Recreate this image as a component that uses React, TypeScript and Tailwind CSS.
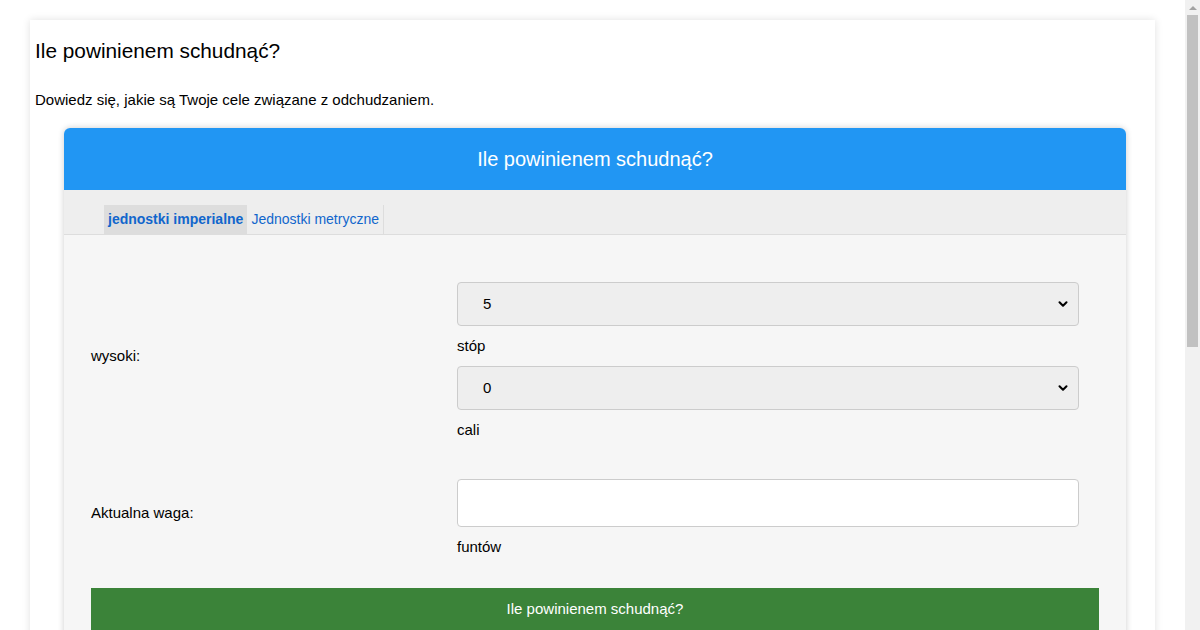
import { ChevronDown } from "lucide-react";

const font = { fontFamily: '"Liberation Sans", Arial, sans-serif' };

function FakeSelect({ value }: { value: string }) {
  return (
    <div className="flex h-[44px] w-[622px] items-center justify-between rounded-[4px] border border-[#cccccc] bg-[#eeeeee] pl-[25px] pr-[8px] text-[15px] text-black">
      <span>{value}</span>
      <ChevronDown size={14} strokeWidth={3.5} className="text-black" />
    </div>
  );
}

function Scrollbar() {
  return (
    <div className="flex h-full w-[15px] shrink-0 flex-col items-center bg-[#f1f1f1]">
      <div className="flex h-[15px] w-full items-center justify-center">
        <div className="h-0 w-0 border-x-[4px] border-b-[4px] border-x-transparent border-b-[#a3a3a3]" />
      </div>
      <div className="h-[332px] w-[11px] bg-[#c1c1c1]" />
    </div>
  );
}

export default function App() {
  return (
    <div className="flex h-screen overflow-hidden bg-white text-black" style={font}>
      <main className="min-w-0 flex-1 overflow-hidden pt-[20px]">
        <div className="mx-auto w-[1125px] bg-white px-[5px] pb-[500px] pt-[19px] shadow-[0_0_8px_rgba(0,0,0,0.12)]">
          <h2 className="text-[20.8px] leading-[24px]">Ile powinienem schudnąć?</h2>
          <p className="mt-[28px] text-[15px] leading-[17px]">
            Dowiedz się, jakie są Twoje cele związane z odchudzaniem.
          </p>

          <div className="ml-[29px] mt-[20px] w-[1062px] overflow-hidden rounded-t-[6px] shadow-[0_0_6px_rgba(0,0,0,0.2)]">
            <div className="flex h-[62px] items-center justify-center bg-[#2196f3] text-[20px] text-white">
              Ile powinienem schudnąć?
            </div>

            <div className="flex border-b border-[#dddddd] bg-[#eeeeee] pl-[40px] pt-[15px]">
              <div className="flex h-[29px] items-center bg-[#dddddd] px-[4px] text-[14px] font-bold text-[#1166cc]">
                jednostki imperialne
              </div>
              <div className="flex h-[29px] items-center border-r border-[#dddddd] px-[4px] text-[14px] text-[#1166cc]">
                Jednostki metryczne
              </div>
            </div>

            <div className="bg-[#f6f6f6] px-[27px] pt-[47px] pb-[40px]">
              <div className="flex items-center">
                <div className="w-[366px] pb-[10px] text-[15px]">wysoki:</div>
                <div className="flex flex-col">
                  <FakeSelect value="5" />
                  <p className="my-[10px] text-[15px] leading-[20px]">stóp</p>
                  <FakeSelect value="0" />
                  <p className="mt-[10px] text-[15px] leading-[20px]">cali</p>
                </div>
              </div>

              <div className="mt-[39px] flex items-center">
                <div className="w-[366px] pb-[10px] text-[15px]">Aktualna waga:</div>
                <div className="flex flex-col">
                  <input
                    type="text"
                    className="h-[48px] w-[622px] rounded-[4px] border border-[#cccccc] bg-white px-[10px] text-[15px] outline-none"
                  />
                  <p className="mt-[10px] text-[15px] leading-[20px]">funtów</p>
                </div>
              </div>

              <button
                type="button"
                className="mt-[31px] flex h-[42px] w-full items-center justify-center bg-[#3b8339] text-[15px] text-white"
              >
                Ile powinienem schudnąć?
              </button>
            </div>
          </div>
        </div>
      </main>
      <Scrollbar />
    </div>
  );
}
